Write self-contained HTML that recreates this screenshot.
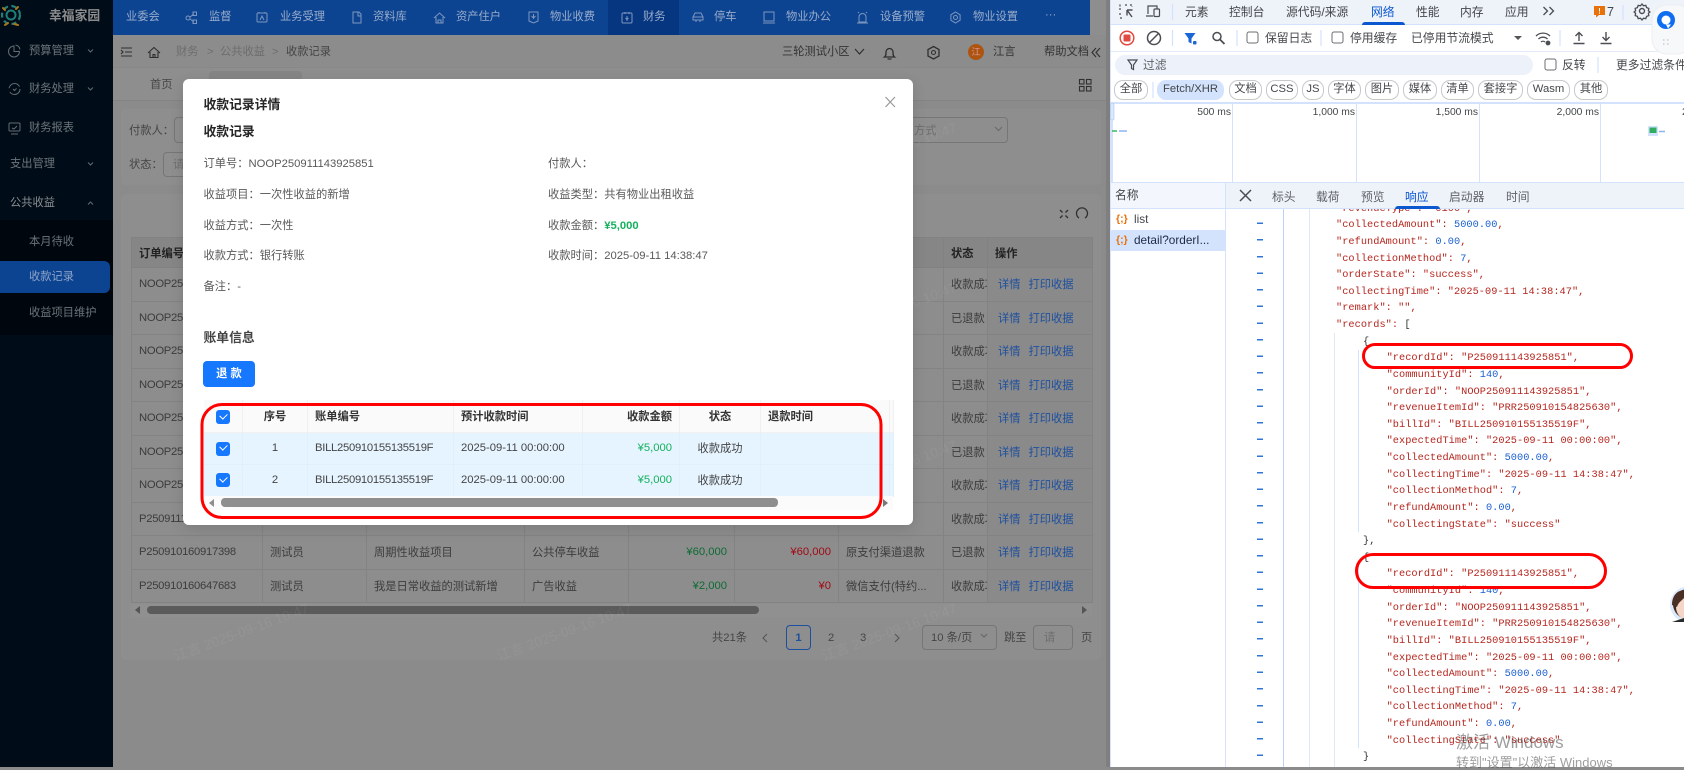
<!DOCTYPE html>
<html lang="zh-CN">
<head>
<meta charset="utf-8">
<title>收款记录</title>
<style>
*{box-sizing:border-box}
html,body{margin:0;padding:0;width:1684px;height:767px;overflow:hidden;background:#8b8b8b;font-family:"Liberation Sans","Noto Sans CJK SC",sans-serif;font-size:11.25px;color:#3a3a3a}
.t{position:absolute;white-space:nowrap;line-height:14px;height:14px;margin-top:-7px}
.box{position:absolute}
svg{position:absolute;left:0;top:0;overflow:visible}
.side{color:#6c757b}
.nav{color:#9aaccc}
.lab{color:#454545}
.hd{color:#6d6d6d}
.m{color:#595959}
.mb{color:#262626;font-weight:700;font-size:12.8px}
table{border-collapse:collapse;table-layout:fixed;position:absolute;font-size:11.25px}
#bt{left:131px;top:237px;width:961px;color:#3c3c3c}
#bt th{height:30px;background:#868686;font-weight:700;text-align:left;padding:0 7px;border:1px solid #828282;color:#222}
#bt td{height:33.5px;padding:0 7px;border:1px solid #838383;white-space:nowrap;overflow:hidden;background:#8d8d8d}
#bt th.r,#mt th.r{text-align:right}
#mt th.c{text-align:center}
.r{text-align:right}
.g{color:#0d6b34}
.rd{color:#a00a14}
.lk{color:#1d4f9f}
.lk i{font-style:normal;margin-right:8px}
.id{letter-spacing:-.28px}
td.op{padding-left:10px!important;background:#8a8a8a!important}
#mt{left:203.5px;top:400px;width:689.5px;color:#444}
#mt th{height:32px;background:#fafafa;font-weight:700;text-align:left;padding:0 7px;border-right:1px solid #f0f0f0;border-bottom:1px solid #f0f0f0;color:#333;font-size:11.25px}
#mt td{height:32px;background:#e6f4ff;padding:0 7px;border-right:1px solid #e0effb;border-bottom:1px solid #e0effb;white-space:nowrap}
.c{text-align:center}
.gb{color:#15b05c}
.cb{position:absolute;width:13.5px;height:14px;border-radius:3px;background:#1677ff}
.cb:after{content:"";position:absolute;left:3.5px;top:2.5px;width:6px;height:4px;border-left:1.3px solid #fff;border-bottom:1.3px solid #fff;transform:rotate(-45deg)}
.dt{color:#44474a;font-size:11.8px}
.chip{position:absolute;top:80px;height:20px;border:1px solid #c6c8cb;border-radius:9px;background:#fff;text-align:center;line-height:17px;font-size:11.25px;color:#44474a}
.tick{position:absolute;white-space:nowrap;line-height:12px;top:107px;font-size:10.3px;color:#44474a;text-align:right}
#code{position:absolute;left:1336px;top:200.7px;margin:0;font-family:"Liberation Mono",monospace;font-size:10.3px;letter-spacing:.03px;line-height:16.63px;color:#b5261e;white-space:pre}
#code b{font-weight:400;color:#1a5fd0}
#code .b{margin-left:27px;color:#333}
#code .d{margin-left:50.6px}
.wm{position:absolute;font-size:14px;line-height:16px;color:rgba(255,255,255,.06);white-space:nowrap;transform:rotate(-20deg);transform-origin:center}
</style>
</head>
<body>
<!-- app base -->
<div class="box" style="left:0;top:0;width:112.5px;height:767px;background:#000c17"></div>
<div class="box" style="left:0;top:220px;width:112.5px;height:115px;background:#00060d"></div>
<div class="box" style="left:0;top:261px;width:110px;height:32px;background:#0c4491;border-radius:0 6px 6px 0"></div>
<div class="box" style="left:112.5px;top:0;width:977.5px;height:35px;background:#0c4491"></div>
<div class="box" style="left:607.5px;top:0;width:71px;height:35px;background:#05367f"></div>
<div class="box" style="left:1090px;top:0;width:20px;height:35px;background:#8e8e8e"></div>
<div class="box" style="left:112.5px;top:35px;width:997.5px;height:33px;background:#8c8c8c;border-bottom:1px solid #888"></div>
<div class="box" style="left:112.5px;top:68px;width:997.5px;height:33px;background:#8e8e8e;border-bottom:1px solid #848484"></div>
<div class="box" style="left:209px;top:71px;width:93px;height:30px;background:#858585;border-radius:4px 4px 0 0"></div>
<div class="box" style="left:121px;top:109px;width:980px;height:76px;background:#8e8e8e;border-radius:4px"></div>
<div class="box" style="left:174px;top:117px;width:834px;height:26px;border:1px solid #767676;border-radius:4px"></div>
<div class="box" style="left:162.5px;top:152px;width:90px;height:25px;border:1px solid #767676;border-radius:4px"></div>
<div class="box" style="left:121px;top:194px;width:980px;height:466px;background:#8e8e8e;border-radius:5px"></div>
<div class="box" style="left:1106px;top:0;width:4px;height:767px;background:#7f7f7f"></div>

<!-- sidebar text -->
<span class="t" style="left:49px;top:16px;font-weight:700;font-size:12.8px;color:#8d8d8d">幸福家园</span>
<span class="t side" style="left:29px;top:51px">预算管理</span>
<span class="t side" style="left:29px;top:89px">财务处理</span>
<span class="t side" style="left:29px;top:128px">财务报表</span>
<span class="t side" style="left:10px;top:164px">支出管理</span>
<span class="t" style="left:10px;top:203px;color:#8a8f92">公共收益</span>
<span class="t side" style="left:29px;top:242px">本月待收</span>
<span class="t" style="left:29px;top:277px;color:#8fa5c8">收款记录</span>
<span class="t side" style="left:29px;top:313px">收益项目维护</span>

<!-- nav text -->
<span class="t nav" style="left:126px;top:17px">业委会</span>
<span class="t nav" style="left:209px;top:17px">监督</span>
<span class="t nav" style="left:280px;top:17px">业务受理</span>
<span class="t nav" style="left:373px;top:17px">资料库</span>
<span class="t nav" style="left:456px;top:17px">资产住户</span>
<span class="t nav" style="left:550px;top:17px">物业收费</span>
<span class="t nav" style="left:643px;top:17px">财务</span>
<span class="t nav" style="left:714px;top:17px">停车</span>
<span class="t nav" style="left:786px;top:17px">物业办公</span>
<span class="t nav" style="left:880px;top:17px">设备预警</span>
<span class="t nav" style="left:973px;top:17px">物业设置</span>
<span class="t nav" style="left:1045px;top:15px">···</span>

<!-- header -->
<span class="t hd" style="left:176px;top:52px">财务</span>
<span class="t hd" style="left:207px;top:52px">&gt;</span>
<span class="t hd" style="left:220px;top:52px">公共收益</span>
<span class="t hd" style="left:272px;top:52px">&gt;</span>
<span class="t lab" style="left:286px;top:52px">收款记录</span>
<span class="t lab" style="left:782px;top:52px;color:#333">三轮测试小区</span>
<span class="t lab" style="left:993px;top:52px;color:#333">江言</span>
<span class="t lab" style="left:1044px;top:52px;color:#333">帮助文档</span>
<div class="box" style="left:968px;top:44px;width:16px;height:16px;border-radius:50%;background:#ad5510;color:#d99;text-align:center;line-height:16px;font-size:9px">江</div>
<span class="t lab" style="left:150px;top:85px">首页</span>
<span class="t lab" style="left:129px;top:131px">付款人：</span>
<span class="t lab" style="left:129px;top:165px">状态：</span>
<span class="t" style="left:173px;top:165px;color:#6e6e6e">请</span>
<span class="t" style="left:914px;top:131px;color:#6e6e6e">方式</span>

<!-- background table -->
<table id="bt">
<colgroup><col style="width:131px"><col style="width:104px"><col style="width:158px"><col style="width:104px"><col style="width:106px"><col style="width:104px"><col style="width:105px"><col style="width:44px"><col style="width:105px"></colgroup>
<tr><th>订单编号</th><th>付款人</th><th>收益项目</th><th>收益类型</th><th class="r">收款金额</th><th class="r">退款金额</th><th>收款方式</th><th>状态</th><th>操作</th></tr>
<tr><td class="id">NOOP250911143925851</td><td></td><td></td><td></td><td></td><td></td><td></td><td>收款成功</td><td class="op lk"><i>详情</i>打印收据</td></tr>
<tr><td class="id">NOOP250911143925851</td><td></td><td></td><td></td><td></td><td></td><td></td><td>已退款</td><td class="op lk"><i>详情</i>打印收据</td></tr>
<tr><td class="id">NOOP250911143925851</td><td></td><td></td><td></td><td></td><td></td><td></td><td>收款成功</td><td class="op lk"><i>详情</i>打印收据</td></tr>
<tr><td class="id">NOOP250911143925851</td><td></td><td></td><td></td><td></td><td></td><td></td><td>已退款</td><td class="op lk"><i>详情</i>打印收据</td></tr>
<tr><td class="id">NOOP250911143925851</td><td></td><td></td><td></td><td></td><td></td><td></td><td>收款成功</td><td class="op lk"><i>详情</i>打印收据</td></tr>
<tr><td class="id">NOOP250911143925851</td><td></td><td></td><td></td><td></td><td></td><td></td><td>已退款</td><td class="op lk"><i>详情</i>打印收据</td></tr>
<tr><td class="id">NOOP250911143925851</td><td></td><td></td><td></td><td></td><td></td><td></td><td>收款成功</td><td class="op lk"><i>详情</i>打印收据</td></tr>
<tr><td class="id">P250911143925851</td><td></td><td></td><td></td><td></td><td></td><td></td><td>收款成功</td><td class="op lk"><i>详情</i>打印收据</td></tr>
<tr><td class="id">P250910160917398</td><td>测试员</td><td>周期性收益项目</td><td>公共停车收益</td><td class="r g">¥60,000</td><td class="r rd">¥60,000</td><td>原支付渠道退款</td><td>已退款</td><td class="op lk"><i>详情</i>打印收据</td></tr>
<tr><td class="id">P250910160647683</td><td>测试员</td><td>我是日常收益的测试新增</td><td>广告收益</td><td class="r g">¥2,000</td><td class="r rd">¥0</td><td>微信支付(特约...</td><td>收款成功</td><td class="op lk"><i>详情</i>打印收据</td></tr>
</table>

<!-- background table scroll -->
<div class="box" style="left:131px;top:604px;width:961px;height:13px;background:#909090"></div>
<div class="box" style="left:147px;top:606px;width:612px;height:8px;border-radius:4px;background:#5b5b5b"></div>

<!-- pagination -->
<span class="t lab" style="left:712px;top:638px">共21条</span>
<div class="box" style="left:786px;top:625px;width:25px;height:25px;border:1px solid #1c4f9e;border-radius:4px;color:#1c4f9e;text-align:center;line-height:24px;font-weight:700">1</div>
<span class="t lab" style="left:828px;top:638px">2</span>
<span class="t lab" style="left:860px;top:638px">3</span>
<div class="box" style="left:922px;top:625px;width:75px;height:25px;border:1px solid #767676;border-radius:4px"></div>
<span class="t lab" style="left:931px;top:638px">10 条/页</span>
<span class="t lab" style="left:1004px;top:638px">跳至</span>
<div class="box" style="left:1033px;top:625px;width:40px;height:25px;border:1px solid #767676;border-radius:4px"></div>
<span class="t" style="left:1044px;top:638px;color:#6e6e6e">请</span>
<span class="t lab" style="left:1081px;top:638px">页</span>

<!-- watermarks -->
<span class="wm" style="left:170px;top:624px">江言 2025-09-16 10:47</span>
<span class="wm" style="left:493px;top:624px">江言 2025-09-16 10:47</span>
<span class="wm" style="left:818px;top:624px">江言 2025-09-16 10:47</span>
<span class="wm" style="left:818px;top:461px">江言 2025-09-16 10:47</span>
<span class="wm" style="left:818px;top:303px">江言 2025-09-16 10:47</span>
<span class="wm" style="left:818px;top:143px">江言 2025-09-16 10:47</span>

<!-- base icons -->
<svg width="1684" height="767" fill="none">
  <circle cx="11" cy="15" r="4.5" stroke="#1f7f78" stroke-width="2"/>
  <circle cx="11" cy="15" r="9" stroke="#1f7f78" stroke-width="2.2" stroke-dasharray="5 3.5"/>
  <path d="M5 25l3-2M14 24l4 1M3 8l2 2M18 7l-2 2" stroke="#a9761b" stroke-width="2" stroke-linecap="round"/>
  <g stroke="#646c72" stroke-width="1">
    <path d="M14 46a5.5 5.5 0 1 0 5.5 5.5H14z"/><path d="M15.5 45a5.5 5.5 0 0 1 4.5 4.5"/>
    <circle cx="14.5" cy="89" r="5.5" stroke-dasharray="14 4"/><path d="M13 89l1.5 1.5 2-2"/>
    <rect x="9" y="123" width="11" height="8" rx="1"/><path d="M11 134h7M12 128l2 1 3-3"/>
    <path d="M88 49.5l2.5 2.5 2.5-2.5M88 87.5l2.5 2.5 2.5-2.5M88 162.5l2.5 2.5 2.5-2.5M88 204.5l2.5-2.5 2.5 2.5"/>
  </g>
  <g stroke="#7e96bf" stroke-width="1">
    <circle cx="188" cy="18" r="2"/><path d="M190 17l4-3M190 19l4 3"/><rect x="193" y="12" width="3.5" height="3.5"/><rect x="193" y="20" width="3.5" height="3.5"/>
    <rect x="257" y="13" width="10" height="9" rx="1"/><path d="M259 13v-1M265 13v-1M260 20l2-4 2 4"/>
    <path d="M353 12h6l2 2v9h-8z"/><path d="M358 12v4h3"/>
    <path d="M434 18l5.5-5 5.5 5M436 17v6h7v-6"/><path d="M438 23v-3h3v3"/>
    <path d="M529 12h9v9l-4.5 2-4.5-2z"/><path d="M533.5 14v5M531.5 16l2 2 2-2"/>
    <rect x="622" y="13" width="10" height="10" rx="1"/><path d="M625 12v2M629 12v2M627 16v5M625.5 18l1.5 1.500 1.500-1.500"/>
    <path d="M693 20v-3l2-4h6l2 4v3zM693 17h10M696 20v2M700 20v2"/>
    <rect x="764" y="12" width="10" height="9"/><path d="M763 23h12"/>
    <path d="M859 22v-5a3.5 3.5 0 0 1 7 0v5zM857 23h11M858 12l1 1M867 12l-1 1"/>
    <circle cx="955.5" cy="17.5" r="2"/><path d="M955.5 12l4.600 2.800v5.400l-4.600 2.800-4.600-2.800v-5.400z"/>
  </g>
  <g stroke="#2f2f2f" stroke-width="1.100">
    <path d="M121 48h11M125 52h7M121 56h11M121 50l2 2-2 2" />
    <path d="M148 53l6-5.500 6 5.500M150 52v5.500h8V52"/><path d="M153 57.500v-3h2v3"/>
    <path d="M855 49l4.500 5 4.500-5" stroke-width="1.200"/>
    <path d="M884.500 57c1.500-1 1.500-2.500 1.500-5a3.500 3.500 0 0 1 7 0c0 2.500 0 4 1.500 5zM887.500 59h4" stroke-width="1.300"/>
    <circle cx="933.500" cy="52.500" r="2"/><path d="M933.500 46.500l5.500 3v6.500l-5.500 3-5.500-3v-6.500z" stroke-width="1.300"/>
    <path d="M1096 48l-4 4.500 4 4.500M1100 48l-4 4.500 4 4.500"/>
    <rect x="1079.500" y="79.500" width="4.500" height="4.500"/><rect x="1086.500" y="79.500" width="4.500" height="4.500"/><rect x="1079.500" y="86.500" width="4.500" height="4.500"/><rect x="1086.500" y="86.500" width="4.500" height="4.500"/>
    <path d="M1060 210l2.500 2.500M1068 210l-2.500 2.500M1060 218l2.500-2.500M1068 218l-2.500-2.500" stroke-width="1.300"/>
    <path d="M1079 218a5.500 5.500 0 1 1 6 0" stroke-width="1.300"/>
    <path d="M767 634l-4 4 4 4M895 634l4 4-4 4" stroke="#555"/>
    <path d="M981 634l3 3 3-3" stroke="#666"/>
  </g>
  <path d="M995 127l3.500 3.500 3.500-3.500" stroke="#686868"/>
  <path d="M140 606v8l-5-4zM1082 606v8l5-4z" fill="#555"/>
</svg>

<!-- modal -->
<div class="box" style="left:183px;top:79px;width:729.500px;height:446px;background:#fff;border-radius:6px;box-shadow:0 4px 14px rgba(0,0,0,.12)"></div>
<span class="t mb" style="left:203.500px;top:105px">收款记录详情</span>
<span class="t mb" style="left:203.500px;top:132px">收款记录</span>
<span class="t m" style="left:203.500px;top:164px">订单号：NOOP250911143925851</span>
<span class="t m" style="left:203.500px;top:195px">收益项目：一次性收益的新增</span>
<span class="t m" style="left:203.500px;top:226px">收益方式：一次性</span>
<span class="t m" style="left:203.500px;top:256px">收款方式：银行转账</span>
<span class="t m" style="left:203.500px;top:287px">备注：-</span>
<span class="t m" style="left:548px;top:164px">付款人：</span>
<span class="t m" style="left:548px;top:195px">收益类型：共有物业出租收益</span>
<span class="t m" style="left:548px;top:226px">收款金额：<b style="color:#15b05c">¥5,000</b></span>
<span class="t m" style="left:548px;top:256px">收款时间：2025-09-11 14:38:47</span>
<span class="t mb" style="left:203.500px;top:338px;color:#444">账单信息</span>
<div class="box" style="left:203px;top:361px;width:52px;height:26px;background:#1677ff;border-radius:4px;color:#fff;text-align:center;line-height:26px;font-weight:700">退 款</div>

<table id="mt">
<colgroup><col style="width:39px"><col style="width:65px"><col style="width:146px"><col style="width:129px"><col style="width:97px"><col style="width:81px"><col style="width:129px"><col style="width:3.500px"></colgroup>
<tr><th></th><th class="c">序号</th><th>账单编号</th><th>预计收款时间</th><th class="r">收款金额</th><th class="c">状态</th><th>退款时间</th><th></th></tr>
<tr><td></td><td class="c">1</td><td class="id">BILL250910155135519F</td><td>2025-09-11 00:00:00</td><td class="r gb">¥5,000</td><td class="c">收款成功</td><td></td><td></td></tr>
<tr><td></td><td class="c">2</td><td class="id">BILL250910155135519F</td><td>2025-09-11 00:00:00</td><td class="r gb">¥5,000</td><td class="c">收款成功</td><td></td><td></td></tr>
</table>
<div class="box" style="left:203.500px;top:496px;width:689.500px;height:14px;background:#fbfbfb"></div>
<div class="box" style="left:220.500px;top:498px;width:557.500px;height:8.500px;background:#8e8e8e;border-radius:4px"></div>
<div class="cb" style="left:216px;top:410px"></div>
<div class="cb" style="left:216px;top:441.500px"></div>
<div class="cb" style="left:216px;top:473px"></div>

<svg width="1684" height="767" fill="none">
  <path d="M885.500 97l9.500 10M895 97l-9.500 10" stroke="#999" stroke-width="1.200"/>
  <path d="M214 499v8l-5-4z" fill="#8e8e8e"/><path d="M883 499v8l5-4z" fill="#777"/>
  <rect x="202" y="404.500" width="679" height="113" rx="20" stroke="#f00" stroke-width="3"/>
</svg>

<!-- devtools -->
<div class="box" style="left:1110px;top:0;width:574px;height:767px;background:#fff;border-left:1.500px solid #d6e2fb"></div>
<div class="box" style="left:1111px;top:0;width:573px;height:24.500px;background:#eef2f9;border-bottom:1px solid #d3e3fd"></div>
<div class="box" style="left:1111px;top:51px;width:573px;height:1px;background:#e3eafa"></div>
<div class="box" style="left:1111px;top:102px;width:573px;height:1.500px;background:#d3e3fd"></div>
<div class="box" style="left:1115px;top:55px;width:418px;height:20px;border-radius:10px;background:#edf2fa"></div>
<div class="box" style="left:1362px;top:21.500px;width:43px;height:3px;border-radius:3px 3px 0 0;background:#0b57d0"></div>

<span class="t dt" style="left:1185px;top:12px">元素</span>
<span class="t dt" style="left:1229px;top:12px">控制台</span>
<span class="t dt" style="left:1286px;top:12px">源代码/来源</span>
<span class="t dt" style="left:1371px;top:12px;color:#0b57d0">网络</span>
<span class="t dt" style="left:1416px;top:12px">性能</span>
<span class="t dt" style="left:1460px;top:12px">内存</span>
<span class="t dt" style="left:1505px;top:12px">应用</span>
<span class="t dt" style="left:1607px;top:12px;font-size:12.500px">7</span>
<span class="t dt" style="left:1265px;top:38px">保留日志</span>
<span class="t dt" style="left:1350px;top:38px">停用缓存</span>
<span class="t dt" style="left:1411px;top:38px">已停用节流模式</span>
<span class="t dt" style="left:1143px;top:65px;color:#5f6368">过滤</span>
<span class="t dt" style="left:1562px;top:65px">反转</span>
<span class="t dt" style="left:1616px;top:65px">更多过滤条件</span>

<div class="chip" style="left:1114px;width:34px">全部</div>
<div class="chip" style="left:1157px;width:67px;background:#d3e3fd;border-color:#d3e3fd">Fetch/XHR</div>
<div class="chip" style="left:1229px;width:33px">文档</div>
<div class="chip" style="left:1266px;width:32px">CSS</div>
<div class="chip" style="left:1302px;width:22px">JS</div>
<div class="chip" style="left:1328px;width:33px">字体</div>
<div class="chip" style="left:1365px;width:34px">图片</div>
<div class="chip" style="left:1403px;width:34px">媒体</div>
<div class="chip" style="left:1441px;width:33px">清单</div>
<div class="chip" style="left:1478px;width:45px">套接字</div>
<div class="chip" style="left:1527px;width:43px">Wasm</div>
<div class="chip" style="left:1574px;width:34px">其他</div>

<span class="tick" style="left:1181px;width:50px">500 ms</span>
<span class="tick" style="left:1295px;width:60px">1,000 ms</span>
<span class="tick" style="left:1418px;width:60px">1,500 ms</span>
<span class="tick" style="left:1539px;width:60px">2,000 ms</span>
<span class="tick" style="left:1682px;width:10px;text-align:left">2</span>

<!-- code -->
<pre id="code"><div>"revenueType": "0100",</div><div>"collectedAmount": <b>5000.00</b>,</div><div>"refundAmount": <b>0.00</b>,</div><div>"collectionMethod": <b>7</b>,</div><div>"orderState": "success",</div><div>"collectingTime": "2025-09-11 14:38:47",</div><div>"remark": "",</div><div>"records": <span style="color:#333">[</span></div><div class="b">{</div><div class="d">"recordId": "P250911143925851",</div><div class="d">"communityId": <b>140</b>,</div><div class="d">"orderId": "NOOP250911143925851",</div><div class="d">"revenueItemId": "PRR250910154825630",</div><div class="d">"billId": "BILL250910155135519F",</div><div class="d">"expectedTime": "2025-09-11 00:00:00",</div><div class="d">"collectedAmount": <b>5000.00</b>,</div><div class="d">"collectingTime": "2025-09-11 14:38:47",</div><div class="d">"collectionMethod": <b>7</b>,</div><div class="d">"refundAmount": <b>0.00</b>,</div><div class="d">"collectingState": "success"</div><div class="b">},</div><div class="b">{</div><div class="d">"recordId": "P250911143925851",</div><div class="d">"communityId": <b>140</b>,</div><div class="d">"orderId": "NOOP250911143925851",</div><div class="d">"revenueItemId": "PRR250910154825630",</div><div class="d">"billId": "BILL250910155135519F",</div><div class="d">"expectedTime": "2025-09-11 00:00:00",</div><div class="d">"collectedAmount": <b>5000.00</b>,</div><div class="d">"collectingTime": "2025-09-11 14:38:47",</div><div class="d">"collectionMethod": <b>7</b>,</div><div class="d">"refundAmount": <b>0.00</b>,</div><div class="d">"collectingState": "success"</div><div class="b">}</div></pre>

<div class="box" style="left:1256.500px;top:216.150px;width:6px;height:551px;background:repeating-linear-gradient(to bottom,transparent 0,transparent 6.500px,#2f74d8 6.500px,#2f74d8 8px,transparent 8px,transparent 16.630px)"></div>
<div class="box" style="left:1225px;top:209px;width:1px;height:558px;background:#d3e3fd"></div>
<div class="box" style="left:1282.500px;top:209px;width:1.500px;height:558px;background:#bcd3f7"></div>
<div class="box" style="left:1309px;top:209px;width:1px;height:558px;background:#dfe8f8"></div>
<div class="box" style="left:1333.500px;top:333px;width:1px;height:434px;background:#dfe8f8"></div>
<div class="box" style="left:1358px;top:350px;width:1px;height:182px;background:#d3e3fd"></div>
<div class="box" style="left:1358px;top:565px;width:1px;height:183px;background:#d3e3fd"></div>

<!-- lower panel header on top of code -->
<div class="box" style="left:1111px;top:182px;width:573px;height:1.500px;background:#d3e3fd"></div>
<div class="box" style="left:1111px;top:183px;width:114px;height:26px;background:#f3f6fc;border-bottom:1px solid #d3e3fd"></div>
<div class="box" style="left:1225px;top:183px;width:459px;height:26px;background:#eef2f9;border-bottom:1px solid #d3e3fd;border-left:1px solid #d3e3fd"></div>
<div class="box" style="left:1395px;top:206px;width:45px;height:3px;border-radius:3px 3px 0 0;background:#0b57d0"></div>
<div class="box" style="left:1111px;top:230px;width:114px;height:20.600px;background:#d3e3fd"></div>
<span class="t dt" style="left:1115px;top:195px">名称</span>
<span class="t dt" style="left:1272px;top:197px;color:#5f6368">标头</span>
<span class="t dt" style="left:1316px;top:197px;color:#5f6368">载荷</span>
<span class="t dt" style="left:1361px;top:197px;color:#5f6368">预览</span>
<span class="t dt" style="left:1405px;top:197px;color:#0b57d0">响应</span>
<span class="t dt" style="left:1449px;top:197px;color:#5f6368">启动器</span>
<span class="t dt" style="left:1506px;top:197px;color:#5f6368">时间</span>
<span class="t" style="left:1116px;top:219px;font-size:10.500px;color:#e8710a;font-weight:700">{;}</span>
<span class="t dt" style="left:1134px;top:219px">list</span>
<span class="t" style="left:1116px;top:240px;font-size:10.500px;color:#e8710a;font-weight:700">{;}</span>
<span class="t dt" style="left:1134px;top:240px;color:#1f2a44">detail?orderI...</span>

<!-- devtools icons -->
<svg width="1684" height="767" fill="none">
  <g stroke="#4a4d52" stroke-width="1.200">
    <path d="M1120 10V5h2M1125 5h2M1130 5h2v2M1120 13v2M1120 18h3" stroke-dasharray="2 1.500"/>
    <path d="M1127 10l5 7M1127 10v5.500M1127 10h5.500" stroke-width="1.400"/>
    <path d="M1148 14V6h9v3M1146 16h7"/><rect x="1154" y="9" width="5.500" height="7.500" rx="1"/>
    <path d="M1172.500 4v16M1172.500 30v16M1237 30v16M1321 30v16M1560 30v16M1598 57v16M1623 5v15M1153 82v16" stroke="#d3e3fd"/>
    <circle cx="1154" cy="38" r="6.500" stroke-width="1.500"/><path d="M1149.500 42.500l9-9" stroke-width="1.500"/>
    <circle cx="1217" cy="36.500" r="4" stroke-width="1.500"/><path d="M1220 39.500l4.500 4.500" stroke-width="1.800"/>
    <path d="M1128 60h9l-3.500 5v4.500l-2-1V65z"/>
    <path d="M1240 190l11 11M1251 190l-11 11" stroke-width="1.500"/>
    <path d="M1536 36a10 10 0 0 1 14 0M1538.500 39a6.500 6.500 0 0 1 9 0M1541 42a3 3 0 0 1 4 0" stroke-width="1.300"/>
    <circle cx="1548" cy="43" r="1.800" fill="#4a4d52"/>
    <path d="M1579 41v-8M1575.500 36l3.500-3.500 3.500 3.500M1573.500 43.500h11" stroke-width="1.400"/>
    <path d="M1606 32v8M1602.500 37l3.500 3.500 3.500-3.500M1600.500 43.500h11" stroke-width="1.400"/>
    <path d="M1543.500 7l4 4-4 4M1549.500 7l4 4-4 4" stroke-width="1.300"/>
    <circle cx="1642" cy="11" r="2.500" stroke-width="1.400"/>
    <path d="M1642 4l1.500 1.800 2.300-.4.800 2.200 2.200.8-.4 2.300 1.500 1.300-1.500 1.300.4 2.300-2.200.8-.8 2.200-2.300-.4-1.500 1.800-1.500-1.800-2.300.4-.8-2.200-2.200-.8.4-2.300-1.500-1.300 1.500-1.300-.4-2.300 2.200-.8.8-2.200 2.300.4z" stroke-width="1.300"/>
  </g>
  <circle cx="1127" cy="38" r="6.800" stroke="#e14b41" stroke-width="1.500"/><rect x="1123.500" y="34.500" width="7" height="7" rx="1" fill="#e14b41"/>
  <path d="M1184.500 33h11l-4 5.500v5l-3-1.500v-3.500z" fill="#1a66d6"/><rect x="1193" y="41" width="3.500" height="3.500" rx="1" fill="#1a66d6"/>
  <rect x="1247" y="32" width="11" height="11" rx="2" stroke="#6a6d72"/>
  <rect x="1332" y="32" width="11" height="11" rx="2" stroke="#6a6d72"/>
  <rect x="1545" y="59" width="11" height="11" rx="2" stroke="#6a6d72"/>
  <path d="M1514 36h8l-4 4z" fill="#555"/>
  <path d="M1594 6h11v9h-6l-3 2.500V15h-2z" fill="#e8710a"/><path d="M1599.500 8v3.500M1599.500 12.500v1.300" stroke="#fff"/>
  <!-- timeline -->
  <path d="M1232.500 103v79M1356.500 103v79M1479.500 103v79M1600.500 103v79" stroke="#d3e3fd"/>
  <path d="M1112 103v79" stroke="#c6d9f8" stroke-width="1.500"/>
  <rect x="1110.500" y="103" width="3.500" height="17" rx="1.500" fill="#dbe7fb" stroke="#a9c6f3" stroke-width=".6"/>
  <path d="M1112 131h5" stroke="#35b864" stroke-width="1.500"/><path d="M1119 131h8" stroke="#8cb4ef" stroke-width="1.500"/>
  <rect x="1648" y="126" width="10" height="10" fill="#d3e3fd"/><rect x="1649.500" y="127.500" width="7" height="5.500" fill="#2fae62"/>
  <path d="M1659 131.500h6" stroke="#8cb4ef" stroke-width="1.500"/>
  <!-- red ovals -->
  <rect x="1363.500" y="344.500" width="268" height="23" rx="11.500" stroke="#f00" stroke-width="3"/>
  <rect x="1356.500" y="554.500" width="249" height="33" rx="16.500" stroke="#f00" stroke-width="3"/>
  <!-- floating widget -->
  <rect x="1652" y="5" width="40" height="49" rx="15" fill="#f7f8fa" stroke="#eceef2"/>
  <circle cx="1666" cy="20" r="9" fill="#0f6df0"/><circle cx="1666" cy="20" r="4.500" fill="#fff"/><path d="M1666 24.500h5l-3 4z" fill="#fff"/>
  <path d="M1663 40h1.500M1667 40h1.500M1663 44h1.500M1667 44h1.500" stroke="#c3c6cb" stroke-width="1.300"/>
  <!-- avatar -->
  <circle cx="1688" cy="604.500" r="18" fill="#dbe9fb"/>
  <circle cx="1688" cy="604" r="15" fill="#3f2a24"/>
  <ellipse cx="1686" cy="607" rx="10" ry="12" fill="#f5d6c6"/>
  <path d="M1672 605c0-12 8-16 16-15l-4 8c-3 3-6 5-7 9z" fill="#4a2f26"/>
  <path d="M1672 622l12-4 8 4z" fill="#2a2a2a"/>
</svg>

<span class="t" style="left:1456px;top:743px;height:20px;line-height:20px;margin-top:-10px;font-size:17px;color:rgba(60,60,60,.5)">激活 Windows</span>
<span class="t" style="left:1456px;top:763px;font-size:13px;color:rgba(60,60,60,.5)">转到"设置"以激活 Windows</span>
</body>
</html>
